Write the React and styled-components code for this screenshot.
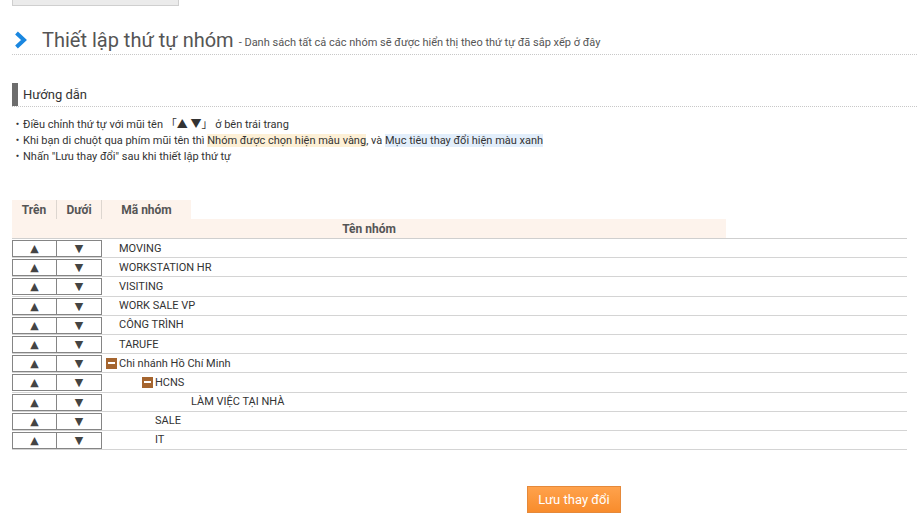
import React from 'react'
import styled, { createGlobalStyle } from 'styled-components'

const GlobalStyle = createGlobalStyle`
  html, body {
    margin: 0;
    padding: 0;
    background: #fff;
  }
  body {
    font-family: Roboto, 'Noto Sans CJK JP', 'Liberation Sans', sans-serif;
    color: #333;
  }
`

const Page = styled.div`
  padding: 0 10px 0 12px;
  width: 917px;
  box-sizing: border-box;
`

const TopBox = styled.div`
  width: 167px;
  height: 6px;
  box-sizing: border-box;
  background: #ebebeb;
  border: 1px solid #cfcfcf;
  border-top: none;
`

const TitleRow = styled.div`
  display: flex;
  align-items: center;
  height: 27px;
  margin-top: 20px;
  margin-right: -10px;
  border-bottom: 1px dotted #c8c8c8;
  padding-bottom: 1px;
`

const Chevron = styled.svg`
  width: 14px;
  height: 18px;
  margin: 0 14px 0 2px;
  flex-shrink: 0;
`

const Title = styled.h1`
  margin: 0;
  font-size: 20px;
  font-weight: 400;
  color: #555;
`

const Subtitle = styled.span`
  font-size: 11px;
  color: #555;
  margin-left: 5px;
  padding-top: 6px;
`

const GuideHead = styled.div`
  display: flex;
  align-items: center;
  height: 23px;
  margin-top: 28px;
  margin-right: -10px;
  border-bottom: 1px dotted #c8c8c8;
  font-size: 13px;
  color: #333;
  &::before {
    content: '';
    width: 6px;
    align-self: stretch;
    background: #6d6d6d;
    margin-right: 5px;
  }
`

const GuideList = styled.ul`
  list-style: none;
  margin: 10px 0 0;
  padding: 0;
`

const GuideItem = styled.li`
  font-size: 11px;
  line-height: 16px;
  color: #333;
  &::before {
    content: '・';
    display: inline-block;
    width: 11px;
  }
`

const Mark = styled.span`
  background: ${p => (p.$tone === 'blue' ? '#e2eefb' : '#fdf0d6')};
`

const TableHead = styled.div`
  margin-top: 35px;
  width: 714px;
`

const HeadTop = styled.div`
  display: grid;
  grid-template-columns: 45px 45px 89px;
  height: 19px;
`

const HeadCell = styled.div`
  background: #fdf3ec;
  font-size: 12px;
  font-weight: 700;
  color: #555;
  display: flex;
  align-items: center;
  justify-content: center;
  border-right: ${p => (p.$sep ? '1px solid #ddd6d0' : 'none')};
`

const HeadBottom = styled.div`
  height: 19px;
  background: #fdf3ec;
  font-size: 12px;
  font-weight: 700;
  color: #555;
  display: flex;
  align-items: center;
  justify-content: center;
`

const Rows = styled.div`
  border-top: 1px solid #cfcfcf;
`

const Row = styled.div`
  display: grid;
  grid-template-columns: 45px 45px 1fr;
  height: 19.2px;
  box-sizing: border-box;
  border-bottom: 1px solid #d4d4d4;
`

const ArrowBtn = styled.button`
  all: unset;
  box-sizing: border-box;
  height: 17px;
  margin-top: 1px;
  border: 1px solid #858585;
  margin-left: ${p => (p.$down ? '-1px' : '0')};
  width: ${p => (p.$down ? '46px' : '45px')};
  display: flex;
  align-items: center;
  justify-content: center;
  font-family: 'DejaVu Sans', sans-serif;
  font-size: 11px;
  color: #444;
  background: #fff;
  cursor: pointer;
`

const NameCell = styled.div`
  display: flex;
  align-items: center;
  font-size: 11px;
  color: #333;
  padding-left: ${p => 4 + p.$level * 36}px;
`

const Toggle = styled.span`
  width: 11px;
  height: 11px;
  margin-right: 2px;
  background: #a5652f;
  display: inline-flex;
  align-items: center;
  justify-content: center;
  &::after {
    content: '';
    width: 7px;
    height: 2px;
    background: #fff;
  }
`

const Name = styled.span`
  padding-left: 13px;
`

const Footer = styled.div`
  margin-top: 36px;
  padding-left: 515px;
`

const SaveButton = styled.button`
  width: 94px;
  height: 27px;
  border: 1px solid #e5893a;
  background: linear-gradient(#ffa24c, #f88c2c);
  color: #fff;
  font-family: Roboto, 'Liberation Sans', sans-serif;
  font-size: 13px;
  cursor: pointer;
`

const groups = [
  { name: 'MOVING', level: 0 },
  { name: 'WORKSTATION HR', level: 0 },
  { name: 'VISITING', level: 0 },
  { name: 'WORK SALE VP', level: 0 },
  { name: 'CÔNG TRÌNH', level: 0 },
  { name: 'TARUFE', level: 0 },
  { name: 'Chi nhánh Hồ Chí Minh', level: 0, open: true },
  { name: 'HCNS', level: 1, open: true },
  { name: 'LÀM VIỆC TẠI NHÀ', level: 2 },
  { name: 'SALE', level: 1 },
  { name: 'IT', level: 1 }
]

const App = () => (
  <Page>
    <GlobalStyle />
    <TopBox />
    <TitleRow>
      <Chevron viewBox='0 0 14 18'>
        <path d='M2.5 2 L10 9 L2.5 16' fill='none' stroke='#1a87e0' strokeWidth='4' strokeLinejoin='miter' />
      </Chevron>
      <Title>Thiết lập thứ tự nhóm</Title>
      <Subtitle>- Danh sách tất cả các nhóm sẽ được hiển thị theo thứ tự đã sắp xếp ở đây</Subtitle>
    </TitleRow>

    <GuideHead>Hướng dẫn</GuideHead>
    <GuideList>
      <GuideItem>Điều chỉnh thứ tự với mũi tên 「▲ ▼」 ở bên trái trang</GuideItem>
      <GuideItem>
        Khi bạn di chuột qua phím mũi tên thì <Mark>Nhóm được chọn hiện màu vàng</Mark>, và{' '}
        <Mark $tone='blue'>Mục tiêu thay đổi hiện màu xanh</Mark>
      </GuideItem>
      <GuideItem>Nhấn "Lưu thay đổi" sau khi thiết lập thứ tự</GuideItem>
    </GuideList>

    <TableHead>
      <HeadTop>
        <HeadCell $sep>Trên</HeadCell>
        <HeadCell $sep>Dưới</HeadCell>
        <HeadCell>Mã nhóm</HeadCell>
      </HeadTop>
      <HeadBottom>Tên nhóm</HeadBottom>
    </TableHead>
    <Rows>
      {groups.map(g => (
        <Row key={g.name}>
          <ArrowBtn>▲</ArrowBtn>
          <ArrowBtn $down>▼</ArrowBtn>
          <NameCell $level={g.level}>
            {g.open ? <><Toggle /><span>{g.name}</span></> : <Name>{g.name}</Name>}
          </NameCell>
        </Row>
      ))}
    </Rows>

    <Footer>
      <SaveButton>Lưu thay đổi</SaveButton>
    </Footer>
  </Page>
)

export default App
